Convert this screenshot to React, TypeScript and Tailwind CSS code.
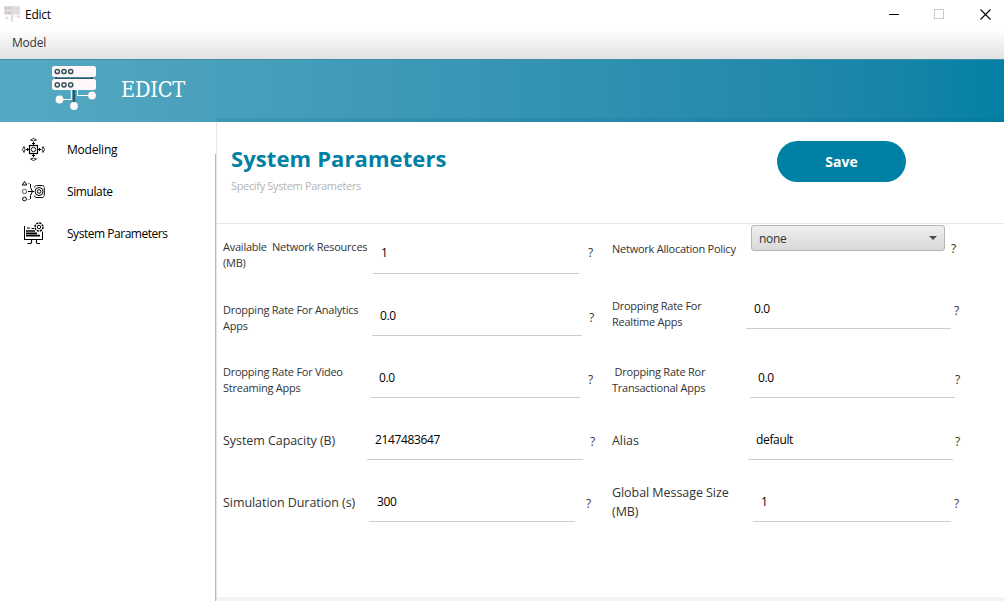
import React from "react";

type FieldProps = {
  label: React.ReactNode;
  labelClass: string;
  inputClass: string;
  value: string;
  helpClass: string;
};

function Field({ label, labelClass, inputClass, value, helpClass }: FieldProps) {
  return (
    <div className="flex w-[389px] shrink-0 items-end">
      <div className={`w-[144px] shrink-0 whitespace-pre text-[#333] ${labelClass}`}>{label}</div>
      <div
        className={`flex h-[42px] shrink-0 items-center border-b border-[#cccccc] pl-2 text-[12px] leading-4 tracking-[-0.35px] text-black ${inputClass}`}
      >
        {value}
      </div>
      <Help className={helpClass} />
    </div>
  );
}

function Help({ className }: { className: string }) {
  return <span className={`shrink-0 text-[12px] leading-4 text-[#333] ${className}`}>?</span>;
}

const small = "text-[11px] leading-4 tracking-[-0.24px]";
const large = "text-[12.5px] leading-[19px] tracking-[-0.06px]";

function Logo({ className, fill, dark }: { className: string; fill: string; dark: string }) {
  return (
    <svg viewBox="0 0 44 44" className={className} fill="none">
      <path d="M4 11v3M40 11v3" stroke={dark} strokeWidth="2" />
      <path d="M4 12.3h36" stroke={dark} strokeWidth="1.2" />
      <rect x="0" y="0" width="44" height="11" rx="2.5" fill={fill} />
      <rect x="0" y="13" width="44" height="11" rx="2.5" fill={fill} />
      <g stroke={dark} strokeWidth="1.5">
        <circle cx="5.3" cy="5.5" r="2.1" />
        <circle cx="12" cy="5.5" r="2.1" />
        <circle cx="18.7" cy="5.5" r="2.1" />
        <circle cx="5.3" cy="18.8" r="2.1" />
        <circle cx="12" cy="18.8" r="2.1" />
        <circle cx="18.7" cy="18.8" r="2.1" />
      </g>
      <path d="M22 24v14" stroke={dark} strokeWidth="2.2" />
      <path d="M8 33.5h11.3V24M25.5 24v5.5H38" stroke={fill} strokeWidth="1.1" />
      <circle cx="7.5" cy="33.5" r="3.9" fill={fill} />
      <circle cx="40" cy="29.5" r="3.9" fill={fill} />
      <circle cx="22" cy="40" r="3.9" fill={fill} />
    </svg>
  );
}

function ModelingIcon() {
  return (
    <svg viewBox="0 0 24 24" className="mb-0.5 size-6" fill="none" stroke="#000" strokeWidth="1">
      <rect x="8.5" y="8.5" width="8" height="8" strokeWidth="1.2" />
      <circle cx="12.5" cy="12.5" r="2.2" strokeWidth=".9" />
      <path d="M12.5 5v3M12.5 17v3M5 12.5h3M17 12.5h3" />
      <path
        d="M9.5 3 12.5 1.4 15.5 3l-3 1zM9.5 22l3 1.6 3-1.6-3-1zM3 9.5 1.4 12.5 3 15.5l1-3zM22 9.5l1.6 3-1.6 3-1-3z"
        strokeWidth=".8"
      />
      <path d="M6.5 11v3M18.5 11v3M11 6.5h3M11 18.5h3" />
    </svg>
  );
}

function SimulateIcon() {
  return (
    <svg viewBox="0 0 24 24" className="mb-0.5 size-6" fill="none" stroke="#000" strokeWidth="1">
      <path d="M1.2 6h4.6L3.5 2.5z" />
      <circle cx="3.5" cy="12.5" r="2.1" stroke="#888" strokeWidth="1.4" />
      <circle cx="3.5" cy="20" r="1.9" />
      <path d="M6.5 4.5h2.5M6.5 20.5h2.5" stroke="#999" />
      <path d="M9.5 5v3.5l2 4-2 4V20M7 12.5h6" />
      <circle cx="18" cy="12.5" r="1.8" />
      <circle cx="18" cy="12.5" r="4" />
      <path d="M15.5 6.5h6l1.8 1M13.2 8.5l1.5-2M23.3 8.5v8M13.2 16.5l1.5 2h7l1.6-1.3" />
    </svg>
  );
}

function ParametersIcon() {
  return (
    <svg viewBox="0 0 24 24" className="mb-0.5 size-6" fill="none" stroke="#000" strokeWidth="1">
      <path d="M3.5 5v14M21.5 10.5v8M3 18.5h19" />
      <path d="M5 10h9M5 12.3h11M5 14.6h14" strokeWidth="1.7" />
      <path d="M6 7h3M10.5 7.5h2.5" />
      <path d="M10.5 19v3M15.5 19v3M6.5 22.5h4M15.5 22.5h3.5" strokeWidth="1.2" />
      <circle cx="18" cy="6" r="4" strokeDasharray="2.2 .9" strokeWidth="1.5" />
      <circle cx="18" cy="6" r="1.7" />
    </svg>
  );
}

export default function App() {
  return (
    <div className="flex h-[601px] w-[1004px] flex-col overflow-hidden bg-white font-['Open_Sans','Noto_Sans',sans-serif] text-[12px] text-black">
      <header className="flex h-[31px] shrink-0 items-center pl-1">
        <Logo className="mb-1 size-4" fill="#e3dcdd" dark="#b5aeb0" />
        <span className="mb-px ml-[5px] leading-4 tracking-[-0.25px]">Edict</span>
        <div className="mr-[13px] mb-[3px] ml-auto flex items-center">
          <span className="h-px w-[10px] bg-black" />
          <span className="ml-[35px] size-[10px] border border-[#cccccc]" />
          <svg viewBox="0 0 11 11" className="ml-9 size-[11px]" stroke="#000" strokeWidth="1.1">
            <path d="M.5.5l10 10M10.5.5l-10 10" />
          </svg>
        </div>
      </header>
      <nav className="flex h-7 shrink-0 items-center bg-linear-to-b from-[#fdfdfd] to-[#e2e2e2] pb-1 pl-3 text-[12px] tracking-[-0.2px] text-[#333]">
        Model
      </nav>
      <div className="relative flex h-[63px] shrink-0 border-t border-[#3c8fa9] bg-linear-to-r from-[#56a9c2] to-[#0380a5] pl-[52px]">
        <Logo className="mt-[6px] size-11" fill="#fff7f8" dark="#35545f" />
        <span className="mt-[14px] ml-[25px] font-['DejaVu_Serif_Condensed','DejaVu_Serif',serif] text-[21.5px] leading-8 font-stretch-condensed tracking-[-0.2px] text-white">
          EDICT
        </span>
        <div className="absolute right-0 bottom-0 left-[217px] h-1 bg-[#00607c]/15" />
      </div>
      <div className="flex grow">
        <aside className="flex w-[215px] flex-col gap-[18px] pt-4 pl-[21px]">
          <div className="flex h-6 items-center gap-[22px] tracking-[-0.2px]"><ModelingIcon />Modeling</div>
          <div className="flex h-6 items-center gap-[22px] tracking-[-0.4px]"><SimulateIcon />Simulate</div>
          <div className="flex h-6 items-center gap-[22px] tracking-[-0.47px]"><ParametersIcon />System Parameters</div>
        </aside>
        <div className="mt-8 w-px bg-[#b9b9b9]" />
        <main className="flex grow flex-col border-l border-[#e6e6e6]">
          <div className="flex h-[102px] shrink-0 border-b border-[#e6e6e6] pl-[14px]">
            <div className="w-[546px] pt-[21px]">
              <h1 className="text-[22px] leading-[30px] font-bold tracking-[0.1px] text-[#0080a4]">System Parameters</h1>
              <p className="mt-[5px] text-[11px] leading-4 tracking-[-0.34px] text-[#b4b4b4]">Specify System Parameters</p>
            </div>
            <button className="mt-[19px] h-[41px] w-[129px] rounded-full bg-[#0080a4] text-[14px] font-bold text-white">
              Save
            </button>
          </div>
          <form className="flex grow flex-col pl-[6px]">
            <div className="flex h-[50px]">
              <Field label={"Available  Network Resources\n(MB)"} labelClass={`${small} pb-[3px]`} inputClass="ml-[6px] w-[206px]" value="1" helpClass="ml-[9px] mb-[13px]" />
              <div className="flex items-start">
                <div className={`mt-[17px] w-[139px] whitespace-nowrap text-[#333] ${small}`}>Network Allocation Policy</div>
                <div className="mt-px flex h-[26px] w-[194px] items-center justify-between rounded-[3px] border border-[#b5b5b5] bg-linear-to-b from-[#efefef] to-[#d9d9d9] px-[7px] text-[#333]">
                  <span className="pt-0.5 tracking-[-0.3px]">none</span>
                  <span className="h-0 w-0 border-x-4 border-t-4 border-x-transparent border-t-[#4d4d4d]" />
                </div>
                <Help className="mt-[17px] ml-[6px]" />
              </div>
            </div>
            <div className="flex h-[62px]">
              <Field label={"Dropping Rate For Analytics\nApps"} labelClass={`${small} pb-[2px]`} inputClass="ml-[5px] w-[210px] pt-0.5" value="0.0" helpClass="ml-[7px] mb-[10px]" />
              <Field label={"Dropping Rate For\nRealtime Apps"} labelClass={`${small} pb-[6px]`} inputClass="mb-[7px] ml-[-10px] w-[205px] pt-0.5" value="0.0" helpClass="ml-[3px] mb-[17px]" />
            </div>
            <div className="flex h-[62px]">
              <Field label={"Dropping Rate For Video\nStreaming Apps"} labelClass={`${small} pb-[2px]`} inputClass="ml-[4px] w-[209px] pt-0.5" value="0.0" helpClass="ml-[8px] mb-[10px]" />
              <Field label={" Dropping Rate Ror\nTransactional Apps"} labelClass={`${small} pb-[2px]`} inputClass="ml-[-6px] w-[205px] pt-0.5" value="0.0" helpClass="ml-0 mb-[10px]" />
            </div>
            <div className="flex h-[62px]">
              <Field label="System Capacity (B)" labelClass={`${large} pb-[10px]`} inputClass="w-[216px] pt-0.5" value="2147483647" helpClass="ml-[7px] mb-[10px]" />
              <Field label="Alias" labelClass={`${large} pb-[10px]`} inputClass="ml-[-8px] w-[205px] pt-0.5" value="default" helpClass="ml-[2px] mb-[10px]" />
            </div>
            <div className="flex h-[62px]">
              <Field label="Simulation Duration (s)" labelClass={`${large} pb-[10px]`} inputClass="ml-[2px] w-[206px] pt-0.5" value="300" helpClass="ml-[11px] mb-[10px]" />
              <Field label={"Global Message Size\n(MB)"} labelClass={`${large} pb-[1px]`} inputClass="ml-[-3px] w-[198px] pt-0.5" value="1" helpClass="ml-[3px] mb-[10px]" />
            </div>
            <div className="mt-auto ml-[-6px] h-1 bg-[#f4f4f4]" />
          </form>
        </main>
      </div>
    </div>
  );
}
